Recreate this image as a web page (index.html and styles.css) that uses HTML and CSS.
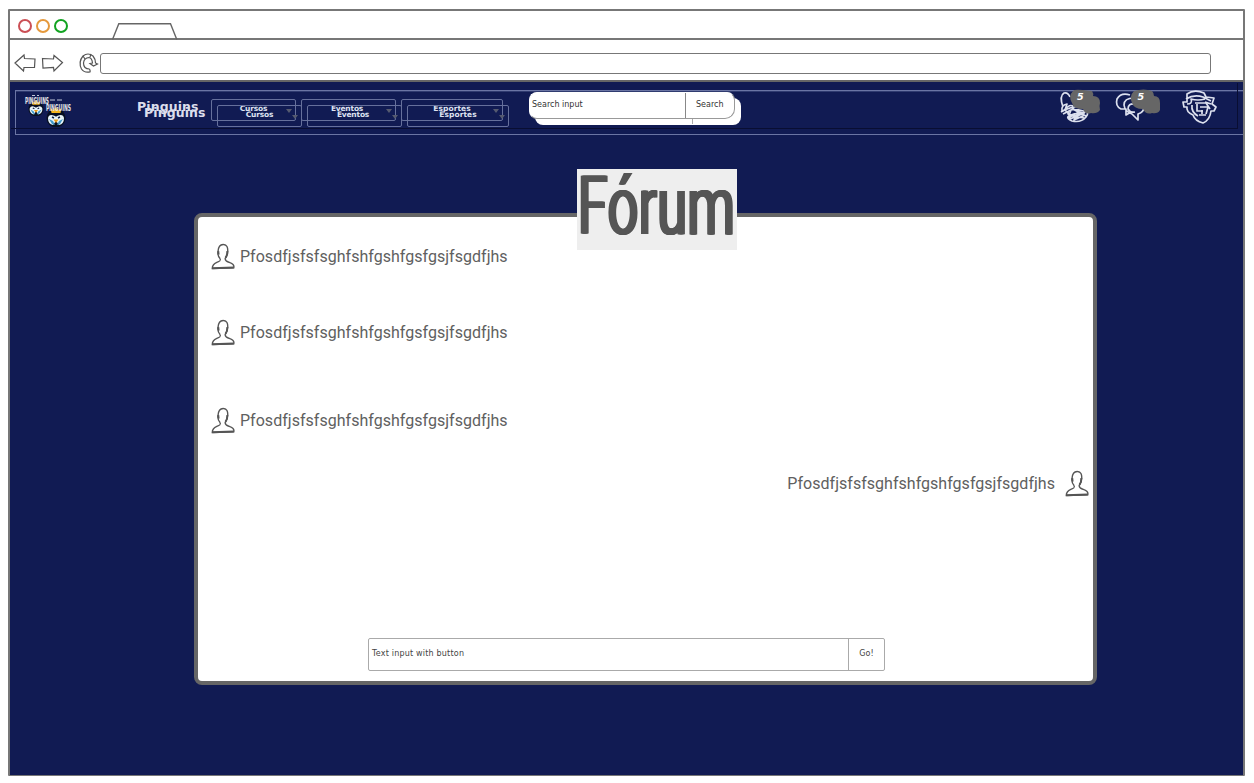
FILE: index.html
```html
<!DOCTYPE html>
<html lang="pt">
<head>
<meta charset="utf-8">
<title>Fórum</title>
<link rel="stylesheet" href="styles.css">
</head>
<body>
<svg class="defs" width="0" height="0">
  <symbol id="user" viewBox="0 0 24 27">
    <path d="M9.200 15.800C6.900 13.500 6.700 11 7 8.600C7.300 4 9.500 1.300 12.600 1.500C15.800 1.600 17 4.500 16.700 8.300C16.600 11.200 15.500 13.500 14.200 15.500C14 18.500 16 18.400 19 19.700C22.500 21 23.300 22.500 22.800 24.700L1.300 25.500C1.200 22 3 20.500 5.800 19.300C8.500 18.300 9.800 18.400 9.200 15.800"/>
    <path class="heavy" d="M1.300 25.300L22.700 24.600M7.200 8.200L7.600 11.500M14.600 14.600C16.300 12.500 16.400 10.500 16.400 8"/>
  </symbol>
  <symbol id="penguin" viewBox="0 0 20 20">
    <circle cx="10" cy="11" r="9.500" fill="#081022"/>
    <path d="M2 11Q3 6 9 9Q10 10 11 9Q17 6 18 11Q18 17 13 18L10 14L7 18Q2 17 2 11" fill="#e9f5fa"/>
    <path d="M3 12L6 17L9 18L7 14ZM17 12L14 17L11 18L13 14Z" fill="#4199c9"/>
    <path d="M6 10L8 11M12 11L14 10" stroke="#102043" stroke-width="1.500"/>
    <path d="M7.500 12.500L12.500 12.500L10 16Z" fill="#e99b17"/>
    <path d="M4.500 1L7.500 3L10 0L12.500 3L15.500 1L14.500 6L5.500 6Z" fill="#f4b51f"/>
  </symbol>
</svg>
<div class="browser">
  <div class="tabs">
    <i class="dot red"></i><i class="dot amber"></i><i class="dot green"></i>
    <svg class="tab" width="67" height="17" viewBox="0 0 67 17"><path d="M.5 16.500L6.800 .8H58.500L64.800 16.500"/></svg>
  </div>
  <div class="toolbar">
    <svg class="arrows" width="50" height="20" viewBox="0 0 50 20"><path d="M1 10L10 2L10.500 5.500L21 6L20.500 14.500L10 14.500L9.500 18Z M28.500 5.500L39.500 6L40 2.500L48.500 9.500L40 18L39.500 14.500L29 15Z"/></svg>
    <svg class="reload" width="21" height="22" viewBox="0 0 21 22"><path d="M10.500 17Q11.500 19 11 20Q5 21 2.500 17Q-1 10 4 4Q9 0 14 4Q16.500 7 16.500 11L18.500 12L14.500 14L11 11.500L13.500 11Q13 6 10 5.500Q5 6 4.500 11Q4.500 17 10.500 17"/><path d="M4 4L6 7M12 2L11 5"/></svg>
    <div class="address"></div>
  </div>
  <div class="screen">
    <nav class="nav">
      <div class="logo">
        <svg width="50" height="36" viewBox="0 0 50 36">
          <use href="#penguin" x="4" y="6" width="16" height="16"/>
          <use href="#penguin" x="21" y="13" width="22" height="20"/>
          <text class="mark" x="1" y="10" textLength="24" lengthAdjust="spacingAndGlyphs">PINGUINS</text>
          <text class="mark" x="22" y="17" textLength="25" lengthAdjust="spacingAndGlyphs">PINGUINS</text>
          <path d="M8 1.500H11M13 1.500H15M26 6H31M33 6H38" stroke="#c3c8d8" stroke-width="1"/>
        </svg>
      </div>
      <div class="brand">Pinguins<span class="echo">Pinguins</span></div>
      <div class="menu m1"><span>Cursos</span><i></i><div class="echo"><span>Cursos</span><i></i></div></div>
      <div class="menu m2"><span>Eventos</span><i></i><div class="echo"><span>Eventos</span><i></i></div></div>
      <div class="menu m3"><span>Esportes</span><i></i><div class="echo"><span>Esportes</span><i></i></div></div>
      <div class="search-wrap">
        <div class="search-echo"><b></b></div>
        <div class="search"><span>Search input</span><b>Search</b></div>
      </div>
      <div class="actions">
        <svg width="165" height="36" viewBox="0 0 165 36">
          <g class="ink">
            <path d="M4 18Q0 7 5 4Q9 3 11 8M3 22Q2 16 8 15L6 21Q10 15 14 17M2 23Q10 18 22 17Q28 17 27 22Q18 30 9 25Q8 18 25 22Q31 23 27 28Q22 34 13 32Q5 28 12 26Q20 23 27 27M4 25L12 21L9 29L20 23L15 31L26 26M10 30Q18 27 25 29M5 20Q10 26 18 29M13 19Q19 24 26 24"/>
            <path d="M71 6Q62 3 58 10Q56 17 62 20L67 20L67 26L72 23M75 9Q65 9 65 16Q66 23 73 25L79 31L79 25Q85 23 85 18M76 15Q69 14 69 20Q71 24 76 23"/>
            <path d="M128 5Q135 0 145 4L147 8L155 9L153 15L157 18L155 22L152 22Q151 31 144 34Q136 32 134 26Q127 23 128 18L125 18L124 13L128 13ZM127 10Q135 5 144 8L152 12M128 15Q134 15 132 10Q139 12 146 10M133 16Q132 23 139 27M136 14L147 14L151 20M138 15L138 22L144 22M141 18L149 18L147 25M140 26L147 26M146 13L152 15M143 21L143 25"/>
          </g>
          <g class="badge">
            <path d="M14 2Q15 0 24 1L33 2Q35 5 34 7Q41 7 41 14Q40 17 41 21Q38 25 32 24Q26 26 24 20Q14 20 13 14Q9 7 14 2Z"/>
            <path d="M75 2Q85-1 93 2Q95 4 95 7Q101 7 101 14Q101 17 101 21Q99 25 93 24Q87 26 84 20Q75 20 73 14Q70 7 75 2Z"/>
          </g>
          <text class="count" x="18" y="11">5</text><text class="count" x="78.500" y="11">5</text>
        </svg>
      </div>
    </nav>
    <main class="panel">
      <h1 class="title"><span>Fórum</span></h1>
      <div class="msg"><svg class="user"><use href="#user"/></svg><span>Pfosdfjsfsfsghfshfgshfgsfgsjfsgdfjhs</span></div>
      <div class="msg second"><svg class="user"><use href="#user"/></svg><span>Pfosdfjsfsfsghfshfgshfgsfgsjfsgdfjhs</span></div>
      <div class="msg third"><svg class="user"><use href="#user"/></svg><span>Pfosdfjsfsfsghfshfgshfgsfgsjfsgdfjhs</span></div>
      <div class="msg mine"><span>Pfosdfjsfsfsghfshfgshfgsfgsjfsgdfjhs</span><svg class="user"><use href="#user"/></svg></div>
      <div class="composer"><span>Text input with button</span><b>Go!</b></div>
    </main>
  </div>
</div>
</body>
</html>
```
FILE: styles.css
```css
* { box-sizing: border-box; }
body { margin: 0; padding: 9px 8px 0; background: #fff; font-family: Roboto, sans-serif; overflow: hidden; }
svg { display: block; fill: none; overflow: visible; }
.defs { position: absolute; }
.browser { width: 1237px; height: 767px; border: 2px solid #777; border-bottom-width: 1px; border-radius: 1px; display: flex; flex-direction: column; }
.tabs { height: 29px; border-bottom: 2px solid #777; display: flex; align-items: flex-start; padding: 8px 0 0 8px; gap: 4px; }
.dot { width: 14px; height: 14px; border-radius: 50%; border: 2px solid; }
.red { color: #cb4f55; }
.amber { color: #e5993c; }
.green { color: #12a321; }
.tab { margin: 4px 0 0 40px; stroke: #666; stroke-width: 1.400; }
.toolbar { height: 42px; border-bottom: 2px solid #666; display: flex; align-items: flex-start; padding-left: 4px; }
.arrows { margin-top: 13px; stroke: #555; stroke-width: 1.200; }
.reload { margin: 12px 0 0 15px; stroke: #555; stroke-width: 1.200; width: 21px; }
.address { width: 1111px; height: 21px; margin-top: 13px; border: 1.500px solid #777; border-radius: 3px; }
.screen { flex: 1; background: #111b53; padding: 8px 0 0 5px; }
.nav { position: relative; height: 45px; border: 1px solid #6b75a4; border-right: 0; display: flex; align-items: flex-start; box-shadow: inset 0 1px #303b70; }
.nav::after { content: ""; position: absolute; left: -5px; right: 5px; top: -8px; height: 45px; border: solid #090e32; border-width: 0 1px 1px 0; }
.logo { width: 121px; padding: 3px 0 0 8px; }
.mark { font: bold 8px "DejaVu Sans", sans-serif; fill: #e3e4e8; }
.brand { width: 74px; margin-top: 8px; position: relative; font: bold 12.500px/15px "DejaVu Sans", sans-serif; color: #dcdeec; letter-spacing: .1px; }
.brand .echo { position: absolute; left: 7px; top: 6px; }
.menu { position: relative; height: 22px; margin: 8px 5px 0 0; border: 1px solid #66709c; border-radius: 2px; color: #dfe2f1; font: bold 7.500px/17px "DejaVu Sans", sans-serif; letter-spacing: -.2px; text-align: center; }
.menu span { display: block; }
.menu .echo { position: absolute; left: 5px; top: 5px; width: 100%; box-sizing: content-box; height: 20px; border: 1px solid #66709c; border-radius: 2px; }
.menu i { position: absolute; right: 3px; top: 9px; border: solid transparent; border-width: 4px 3px 0; border-top-color: #555a70; }
.m1 { width: 85px; }
.m2 { width: 95px; }
.m3 { width: 102px; }
.m2 span { padding-right: 3px; }
.m3 span { letter-spacing: .05px; }
.search-wrap { position: relative; width: 530px; margin: 1px 0 0 21px; }
.search-echo { position: absolute; left: 6px; top: 6px; width: 206px; height: 27px; background: #fff; border-radius: 8px; }
.search-echo b { display: block; width: 158px; height: 26px; border-right: 1px solid #aaa; }
.search { position: relative; width: 206px; height: 27px; background: #fff; border: 1px solid #999; border-top-color: #fff; border-left-color: #fff; border-radius: 8px 8px 10px 8px; display: flex; justify-content: space-between; font: 8px/23px "DejaVu Sans", sans-serif; color: #333; }
.search span { padding-left: 2px; }
.search b { font-weight: normal; width: 49px; border-left: 1px solid #888; padding-left: 10px; }
.actions { margin-top: -2px; }
.ink { stroke: #dce0ee; stroke-width: 1.700; stroke-linejoin: round; }
.badge { fill: #666; }
.count { font: bold italic 9.500px "DejaVu Sans", sans-serif; fill: #fff; }
.panel { position: relative; width: 903px; height: 472px; margin: 78px 0 0 179px; border: 4px solid #666; border-radius: 8px; background: #fff; padding: 26px 4px 0 13px; display: flex; flex-direction: column; align-items: flex-start; }
.title { position: absolute; left: 379px; top: -48px; margin: 0; width: 160px; height: 81px; background: #eee; font: 400 81px/81px Roboto, sans-serif; color: #555; }
.title span { display: block; width: max-content; transform: scaleX(.675); transform-origin: 0 0; margin-top: -3px; text-shadow: 1px 0 #555, -1px 0 #555, 2px 0 #555, 3px 0 #555; }
.msg { display: flex; align-items: center; height: 27px; gap: 5px; font-size: 16px; color: #606060; letter-spacing: .03px; }
.user { width: 24px; height: 27px; stroke: #555; stroke-width: 1.400; }
.heavy { stroke-width: 2; }
.second { margin-top: 49px; }
.third { margin-top: 61px; }
.mine { margin-top: 36px; align-self: flex-end; gap: 10px; }
.composer { width: 517px; height: 33px; margin: 141px 0 0 157px; border: 1px solid #aaa; border-radius: 2px; display: flex; justify-content: space-between; font: 8px/29px "DejaVu Sans", sans-serif; color: #444; }
.composer span { padding-left: 3px; letter-spacing: .2px; }
.composer b { width: 36px; border-left: 1px solid #aaa; font-weight: normal; text-align: center; }
```
